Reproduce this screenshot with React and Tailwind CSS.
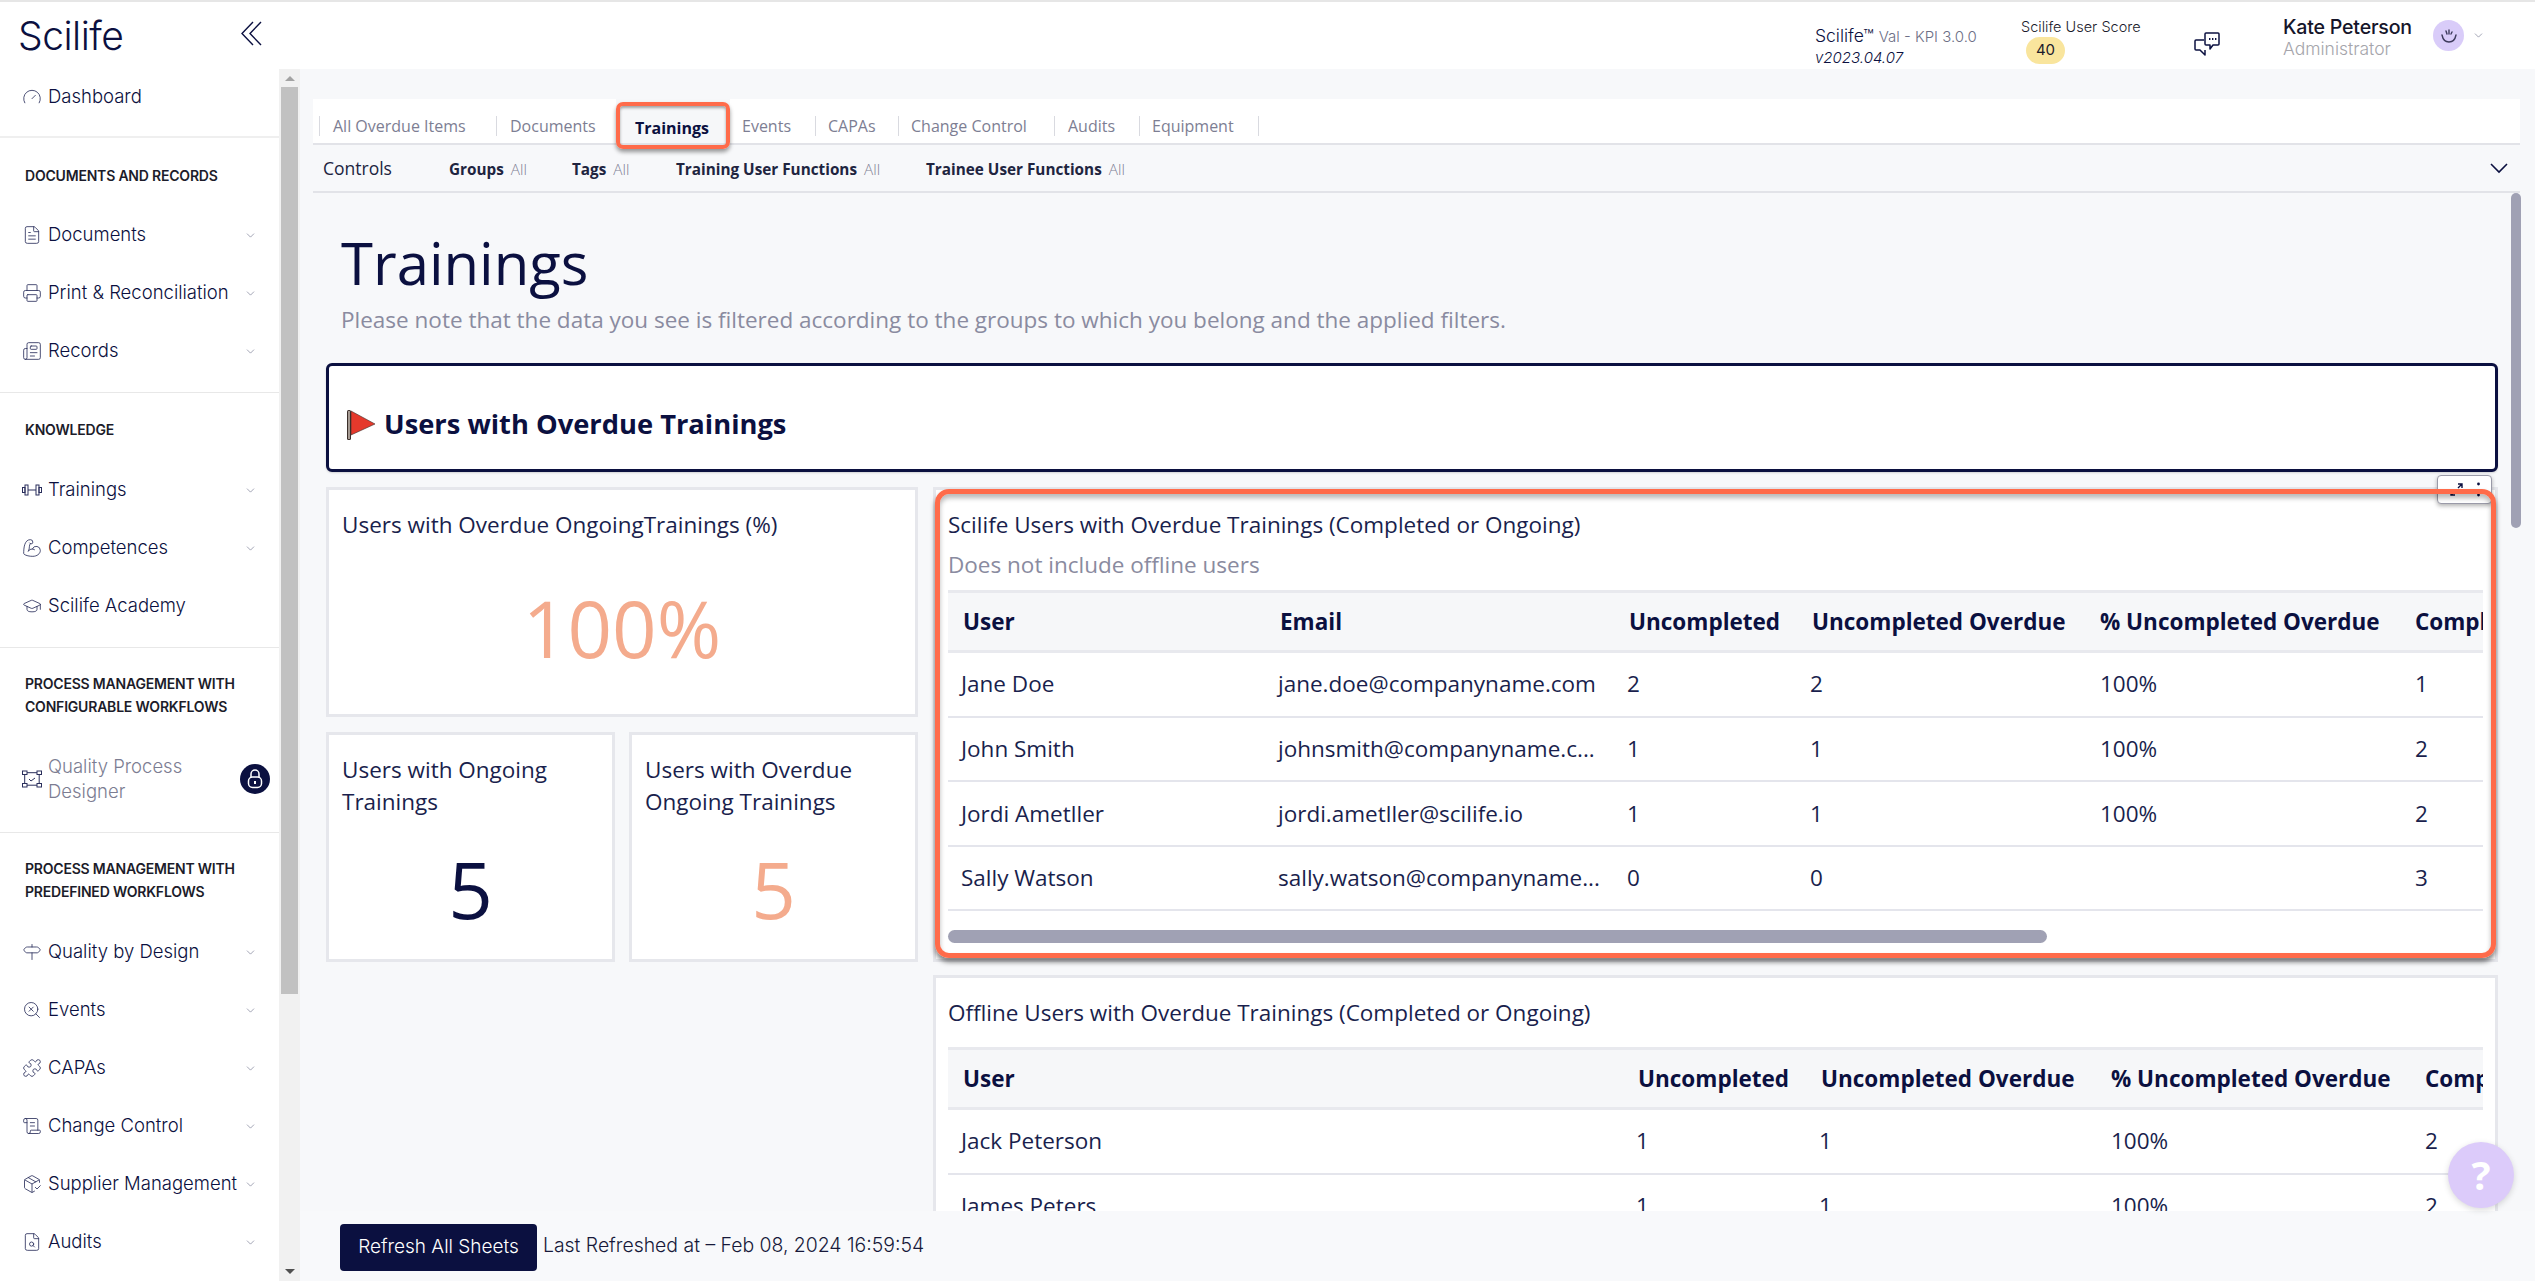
import React from "react";
import { Gauge, FileText, Printer, Newspaper, BicepsFlexed, GraduationCap, Signpost, SearchX, Puzzle, ScrollText, PackageCheck, FileSearch, ChevronDown } from "lucide-react";

const SANS = "font-['Inter',sans-serif]";

function DumbbellH({ size = 20, strokeWidth = 1, className }) {
  return (
    <svg width={size} height={size} viewBox="0 0 20 20" fill="none" stroke="currentColor" strokeWidth={strokeWidth} className={className}>
      <rect x="0.5" y="7.5" width="2.5" height="5" />
      <rect x="3" y="5" width="3" height="10" />
      <path d="M6 10h8" />
      <rect x="14" y="5" width="3" height="10" />
      <rect x="17" y="7.5" width="2.5" height="5" />
    </svg>
  );
}

function ProcessNodes({ size = 20, strokeWidth = 1, className }) {
  return (
    <svg width={size} height={size} viewBox="0 0 20 20" fill="none" stroke="currentColor" strokeWidth={strokeWidth} className={className}>
      <rect x="0.5" y="2" width="4.5" height="3.5" />
      <rect x="15" y="2" width="4.5" height="3.5" />
      <rect x="0.5" y="14.5" width="4.5" height="3.5" />
      <rect x="15" y="14.5" width="4.5" height="3.5" />
      <path d="M5 3.7h10M2.7 5.5v9M17.2 5.5v9M5 16.2h10M7 10l2 2 4-3" />
    </svg>
  );
}

function NavItem({ icon: Icon, label, chevron = true }) {
  return (
    <div className="h-[58px] flex items-center pl-[22px] pr-[22px] relative">
      <Icon size={20} strokeWidth={1} className="text-[#2a2f5c] shrink-0" />
      <span className="ml-[6px] text-[18.5px] font-light text-[#0b1040] whitespace-nowrap">{label}</span>
      {chevron && <ChevronDown size={13} strokeWidth={1} className="ml-auto text-[#555a78] shrink-0" />}
    </div>
  );
}

function Heading({ children }) {
  return <div className="pl-[25px] text-[14px] leading-[23px] font-semibold text-[#1c1c2a] uppercase whitespace-nowrap tracking-[-0.2px]">{children}</div>;
}

function Sidebar() {
  return (
    <aside className={`w-[279px] shrink-0 bg-white overflow-hidden ${SANS}`}>
      <div className="h-[55px] flex items-center pl-[22px]">
        <Gauge size={20} strokeWidth={1} className="text-[#2a2f5c]" />
        <span className="ml-[6px] text-[18.5px] font-light text-[#0b1040]">Dashboard</span>
      </div>
      <div className="mt-[12px] border-t-2 border-[#efefef] pt-[26px] pb-[12px]">
        <Heading>Documents and Records</Heading>
        <div className="mt-[19px]">
          <NavItem icon={FileText} label="Documents" />
          <NavItem icon={Printer} label="Print & Reconciliation" />
          <NavItem icon={Newspaper} label="Records" />
        </div>
      </div>
      <div className="border-t border-[#e8e8e8] pt-[25px] pb-[12px]">
        <Heading>Knowledge</Heading>
        <div className="mt-[20px]">
          <NavItem icon={DumbbellH} label="Trainings" />
          <NavItem icon={BicepsFlexed} label="Competences" />
          <NavItem icon={GraduationCap} label="Scilife Academy" chevron={false} />
        </div>
      </div>
      <div className="border-t border-[#e8e8e8] pt-[24px] pb-[24px]">
        <Heading>Process Management with<br />Configurable Workflows</Heading>
        <div className="mt-[32px] h-[58px] flex items-center pl-[22px] pr-[9px]">
          <ProcessNodes size={20} strokeWidth={1} className="text-[#2a2f5c] shrink-0" />
          <span className="ml-[6px] text-[18.5px] font-light leading-[25px] text-[#7c7d92]">Quality Process<br />Designer</span>
          <span className="ml-auto w-[30px] h-[30px] rounded-full bg-[#0b1040] flex items-center justify-center">
            <svg width="16" height="20" viewBox="0 0 16 20" fill="none" stroke="#fff" strokeWidth="1.5">
              <path d="M4 8V5a4 4 0 0 1 8 0v3" />
              <rect x="1.5" y="8" width="13" height="10.5" rx="4" />
              <path d="M8 12v3" strokeWidth="2" />
            </svg>
          </span>
        </div>
      </div>
      <div className="border-t border-[#e8e8e8] pt-[24px]">
        <Heading>Process Management with<br />Predefined Workflows</Heading>
        <div className="mt-[20px]">
          <NavItem icon={Signpost} label="Quality by Design" />
          <NavItem icon={SearchX} label="Events" />
          <NavItem icon={Puzzle} label="CAPAs" />
          <NavItem icon={ScrollText} label="Change Control" />
          <NavItem icon={PackageCheck} label="Supplier Management" />
          <NavItem icon={FileSearch} label="Audits" />
        </div>
      </div>
    </aside>
  );
}

function SideScroll() {
  return (
    <div className="w-[21px] shrink-0 bg-[#f1f1f1] flex flex-col items-center">
      <div className="h-[18px] w-full flex items-center justify-center">
        <div className="w-0 h-0 border-x-[5px] border-x-transparent border-b-[5px] border-b-[#a3a3a3]" />
      </div>
      <div className="w-[17px] h-[907px] bg-[#c1c1c1]" />
      <div className="flex-1" />
      <div className="h-[18px] w-full flex items-center justify-center mb-[1px]">
        <div className="w-0 h-0 border-x-[5px] border-x-transparent border-t-[5px] border-t-[#505050]" />
      </div>
    </div>
  );
}

function TopBar() {
  return (
    <header className={`h-[69px] shrink-0 bg-white border-t-2 border-[#e6e6e6] flex items-center ${SANS}`}>
      <div className="w-[1815px] shrink-0 flex items-center">
        <span className="ml-[18px] text-[39px] font-light leading-none text-[#0b1040] tracking-[-0.5px]">Scilife</span>
        <svg className="ml-[118px] -mt-[4px]" width="21" height="25" viewBox="0 0 21 25" fill="none" stroke="#0b1040" strokeWidth="1.4">
          <path d="M12 1L1 12.5 12 24M20 1L9 12.5 20 24" />
        </svg>
      </div>
      <div className="w-[206px] shrink-0 text-[#0b1040] pt-[20px]">
        <div className="text-[17.5px] font-light leading-[23px] whitespace-nowrap">Scilife™ <span className="text-[15px] text-[#6d6f86]">Val - KPI 3.0.0</span></div>
        <div className="text-[15px] font-light leading-[20px] italic">v2023.04.07</div>
      </div>
      <div className="w-[173px] shrink-0 text-[#1b1b2c] pt-[10px]">
        <div className="text-[14.5px] font-light leading-[18px] whitespace-nowrap">Scilife User Score</div>
        <div className="ml-[5px] mt-[1px] w-[39px] h-[27px] rounded-full bg-[#f9e59d] flex items-center justify-center text-[15px]">40</div>
      </div>
      <div className="w-[89px] shrink-0 pt-[16px]">
        <svg width="26" height="24" viewBox="0 0 26 24" fill="none" stroke="#0b1040" strokeWidth="1.5" strokeLinejoin="round">
          <path d="M10 8H2a1 1 0 0 0-1 1v8a1 1 0 0 0 1 1h4l5 5v-5" />
          <path d="M11 2a1 1 0 0 1 1-1h12a1 1 0 0 1 1 1v10a1 1 0 0 1-1 1h-5l-3 4v-4h-4a1 1 0 0 1-1-1z" fill="#fff" />
          <path d="M15 7h1.4M18 7h1.4M21 7h1.4" strokeWidth="2" />
        </svg>
      </div>
      <div className="w-[150px] shrink-0 pt-[5px]">
        <div className="text-[19.6px] leading-[22px] font-medium text-[#15152a] whitespace-nowrap tracking-[-0.2px]">Kate Peterson</div>
        <div className="text-[17.5px] font-light leading-[22px] text-[#a5a5ab] whitespace-nowrap">Administrator</div>
      </div>
      <div className="w-[31px] h-[31px] rounded-full bg-[#d9ccf9] flex items-center justify-center shrink-0">
        <svg width="22" height="22" viewBox="0 0 22 22" fill="none" stroke="#3d3a5c" strokeWidth="1.4" strokeLinecap="round">
          <path d="M4 10c1 5 3 7 7 7s6-2 7-7" />
          <path d="M8 6l1 3M11 5v4M14 7l-1 2" />
        </svg>
      </div>
      <ChevronDown size={13} strokeWidth={1} className="ml-[8px] text-[#555a78]" />
    </header>
  );
}

const tabs = [
  { label: "All Overdue Items", cls: "w-[177px] border-l pl-[13px]" },
  { label: "Documents", cls: "w-[120px] border-l pl-[13px]" },
  { label: "Trainings", active: true, cls: "w-[114px] pl-[19px]" },
  { label: "Events", cls: "w-[85px] pl-[12px]" },
  { label: "CAPAs", cls: "w-[83px] border-l pl-[12px]" },
  { label: "Change Control", cls: "w-[156px] border-l pl-[12px]" },
  { label: "Audits", cls: "w-[85px] border-l pl-[13px]" },
  { label: "Equipment", cls: "w-[120px] border-x pl-[12px]" },
];

function Tabs() {
  return (
    <div className="ml-[13px] w-[2207px] h-[46px] bg-white border-b-2 border-[#e2e3e8] pl-[6px] flex items-end">
      {tabs.map((t) =>
        t.active ? (
          <div key={t.label} className={`relative h-[44px] bg-[#f6f7f9] flex items-center pt-[14px] text-[16px] font-bold text-[#0b1040] ${t.cls}`}>
            {t.label}
            <div className="absolute left-0 right-0 top-[3px] h-[47px] border-[4px] border-[#ff6b4a] rounded-[7px] shadow-[0_3px_4px_rgba(0,0,0,0.4),inset_0_2px_3px_rgba(0,0,0,0.35)]" />
          </div>
        ) : (
          <div key={t.label} className={`h-[20px] mb-[7px] border-[#d9dae0] flex items-center text-[16px] text-[#7d7e93] whitespace-nowrap ${t.cls}`}>
            {t.label}
          </div>
        )
      )}
    </div>
  );
}

function Filter({ label, cls }) {
  return (
    <div className={`flex items-center gap-[7px] whitespace-nowrap pt-[2px] ${cls}`}>
      <span className="text-[15.3px] font-bold text-[#20243f]">{label}</span>
      <span className="text-[15.3px] font-light text-[#7d7e93]">All</span>
    </div>
  );
}

function Controls() {
  return (
    <div className="ml-[13px] w-[2207px] h-[48px] border-b-2 border-[#e2e3e8] pl-[10px] pr-[12px] flex items-center">
      <span className="w-[126px] text-[17.5px] text-[#20243f]">Controls</span>
      <Filter label="Groups" cls="w-[123px]" />
      <Filter label="Tags" cls="w-[104px]" />
      <Filter label="Training User Functions" cls="w-[250px]" />
      <Filter label="Trainee User Functions" cls="w-[250px]" />
      <svg className="ml-auto" width="18" height="11" viewBox="0 0 18 11" fill="none" stroke="#0b1040" strokeWidth="1.6"><path d="M1 1l8 8 8-8" /></svg>
    </div>
  );
}

function KpiCard({ title, value, orange, cls, valueMt }) {
  return (
    <div className={`${cls} h-[230px] bg-white border-[3px] border-[#e6e7ec] pt-[19px] px-[13px] text-[#1a1f4d]`}>
      <div className="text-[22.5px] leading-[32px]">{title}</div>
      <div className={`${valueMt} text-center text-[78px] leading-[100px] ${orange ? "text-[#f4ab8d]" : "text-[#0b1040]"}`}>{value}</div>
    </div>
  );
}

function Table({ cols, head, rows, tdPl }) {
  return (
    <div className="mx-[12px] overflow-hidden">
      <table className="table-fixed w-[1652px] border-separate border-spacing-0 text-[#1a1f4d]">
        <colgroup>
          {cols.map((c, i) => <col key={i} className={c} />)}
        </colgroup>
        <thead>
          <tr>
            {head.map((h) => (
              <th key={h} className="h-[63px] pl-[15px] text-left text-[22.5px] font-bold text-[#0b1040] bg-[#f6f7f9] border-y-[3px] border-[#e8e9ee] whitespace-nowrap">{h}</th>
            ))}
          </tr>
        </thead>
        <tbody>
          {rows.map((r, i) => (
            <tr key={i}>
              {r.map((c, j) => (
                <td key={j} className={`h-[64.6px] text-[22.5px] border-b-2 border-[#e4e5ec] whitespace-nowrap ${j >= tdPl ? "pl-[15px]" : "pl-[13px]"}`}>{c}</td>
              ))}
            </tr>
          ))}
        </tbody>
      </table>
    </div>
  );
}

function Content() {
  return (
    <div className="pl-[26px] w-[2198px]">
      <h1 className="pt-[35px] pl-[15px] text-[58px] leading-[70px] text-[#0b1040]">Trainings</h1>
      <p className="mt-[6px] pl-[15px] text-[22.5px] leading-[32px] text-[#8a8ba0]">Please note that the data you see is filtered according to the groups to which you belong and the applied filters.</p>
      <div className="mt-[27px] h-[109px] bg-white border-[3px] border-[#0b1040] rounded-[6px] flex items-center pl-[17px] pt-[14px] shadow-[0_1px_2px_rgba(0,0,0,0.15)]">
        <svg width="30" height="32" viewBox="0 0 30 32" className="shrink-0">
          <rect x="1" y="1" width="4" height="30" rx="1.5" fill="#3b2f2b" />
          <rect x="2" y="2" width="2" height="28" fill="#a59a92" />
          <path d="M5 2l24 13L5 26z" fill="#e5392c" stroke="#3b2f2b" strokeWidth="0.6" />
        </svg>
        <span className="ml-[8px] text-[27.3px] font-bold text-[#0b1040]">Users with Overdue Trainings</span>
      </div>
      <div className="mt-[15px] flex gap-[15px] items-start">
        <div className="w-[592px] shrink-0 flex flex-col gap-[15px]">
          <KpiCard cls="w-full" title="Users with Overdue OngoingTrainings (%)" value="100%" orange valueMt="mt-[37px]" />
          <div className="flex gap-[14px]">
            <KpiCard cls="flex-1" title={<>Users with Ongoing<br />Trainings</>} value="5" valueMt="mt-[21px]" />
            <KpiCard cls="flex-1" title={<>Users with Overdue<br />Ongoing Trainings</>} value="5" orange valueMt="mt-[21px]" />
          </div>
        </div>
        <div className="w-[1565px] shrink-0 flex flex-col gap-[13px]">
          <div className="relative h-[475px] bg-white border-[3px] border-[#e6e7ec]">
            <div className="pl-[12px] pt-[19px] text-[22.5px] leading-[32px] text-[#1a1f4d]">Scilife Users with Overdue Trainings (Completed or Ongoing)</div>
            <div className="pl-[12px] mt-[8px] mb-[9px] text-[22.5px] leading-[32px] text-[#8a8ba0]">Does not include offline users</div>
            <Table
              cols={["w-[317px]", "w-[349px]", "w-[183px]", "w-[288px]", "w-[315px]", "w-[200px]"]}
              head={["User", "Email", "Uncompleted", "Uncompleted Overdue", "% Uncompleted Overdue", "Completed"]}
              tdPl={4}
              rows={[
                ["Jane Doe", "jane.doe@companyname.com", "2", "2", "100%", "1"],
                ["John Smith", "johnsmith@companyname.c...", "1", "1", "100%", "2"],
                ["Jordi Ametller", "jordi.ametller@scilife.io", "1", "1", "100%", "2"],
                ["Sally Watson", "sally.watson@companyname...", "0", "0", "", "3"],
              ]}
            />
            <div className="ml-[12px] mt-[19px] w-[1099px] h-[13px] rounded-[7px] bg-[#a0a1b4]" />
            <div className="absolute -left-[1px] -top-[1px] right-[-1px] h-[469px] border-[5px] border-[#ff6b4a] rounded-[14px] shadow-[0_4px_5px_rgba(0,0,0,0.5),inset_0_4px_5px_rgba(0,0,0,0.28)] z-10" />
            <div className="absolute right-[3px] -top-[15px] w-[55px] h-[29px] bg-white border border-[#9a9aa8] rounded-[4px] shadow-[0_2px_4px_rgba(0,0,0,0.3)] z-0 flex items-center justify-center gap-[13px]">
              <svg width="15" height="15" viewBox="0 0 15 15" fill="none" stroke="#0b1040" strokeWidth="1.4"><path d="M2 13l4-4M13 2L9 6M9 2h4v4M2 9v4h4" /></svg>
              <svg width="3" height="15" viewBox="0 0 3 15" fill="#0b1040"><circle cx="1.5" cy="2" r="1.4" /><circle cx="1.5" cy="13" r="1.4" /></svg>
            </div>
          </div>
          <div className="bg-white border-[3px] border-[#e6e7ec] h-[400px]">
            <div className="pl-[12px] pt-[19px] pb-[18px] text-[22.5px] leading-[32px] text-[#1a1f4d]">Offline Users with Overdue Trainings (Completed or Ongoing)</div>
            <Table
              cols={["w-[675px]", "w-[183px]", "w-[290px]", "w-[314px]", "w-[190px]"]}
              head={["User", "Uncompleted", "Uncompleted Overdue", "% Uncompleted Overdue", "Completed"]}
              tdPl={3}
              rows={[
                ["Jack Peterson", "1", "1", "100%", "2"],
                ["James Peters", "1", "1", "100%", "2"],
              ]}
            />
          </div>
        </div>
      </div>
    </div>
  );
}

export default function App() {
  return (
    <div className="w-[2535px] h-[1281px] overflow-hidden flex flex-col bg-[#f7f8fa] font-['Open_Sans',sans-serif] relative">
      <TopBar />
      <div className="flex-1 min-h-0 flex">
        <Sidebar />
        <SideScroll />
        <main className="flex-1 min-w-0 flex flex-col relative">
          <div className="h-[1142px] overflow-hidden pt-[30px]">
            <Tabs />
            <Controls />
            <Content />
          </div>
          <div className={`flex-1 flex items-center pl-[40px] pb-[1px] bg-[#f8f9fb] ${SANS}`}>
            <button className="w-[197px] h-[47px] rounded-[4px] bg-[#0b1040] text-white text-[19px] font-light mt-[4px]">Refresh All Sheets</button>
            <span className="ml-[6px] text-[19.4px] font-light text-[#17193a]">Last Refreshed at – Feb 08, 2024 16:59:54</span>
          </div>
          <div className="absolute left-[2211px] top-[124px] w-[10px] h-[335px] rounded-[5px] bg-[#a0a1b4]" />
        </main>
      </div>
      <div className="absolute left-[2448px] top-[1142px] w-[66px] h-[66px] rounded-full bg-[#dccbfa] flex items-center justify-center text-white text-[40px] font-bold shadow-[0_2px_6px_rgba(0,0,0,0.15)] z-20">?</div>
    </div>
  );
}
